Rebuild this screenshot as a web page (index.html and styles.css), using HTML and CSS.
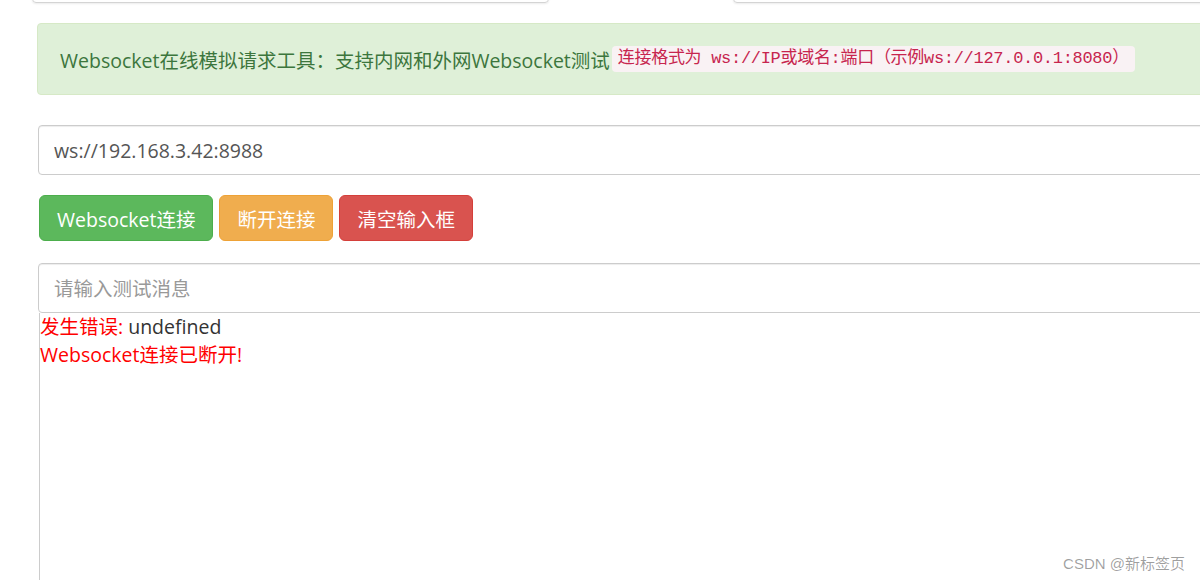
FILE: index.html
```html
<!DOCTYPE html>
<html lang="zh-CN">
<head>
<meta charset="utf-8">
<title>Websocket在线模拟请求工具</title>
<link rel="stylesheet" href="styles.css">
</head>
<body>
<div class="main">
  <div class="toprow">
    <div class="topbox left"></div>
    <div class="topbox right"></div>
  </div>

  <div class="alert">
    <span class="lead">Websocket在线模拟请求工具：支持内网和外网Websocket测试</span><code class="hint">连接格式为 ws://IP或域名:端口（示例ws://127.0.0.1:8080）</code>
  </div>

  <input class="field url" type="text" value="ws://192.168.3.42:8988">

  <div class="btnrow">
    <button class="btn green">Websocket连接</button>
    <button class="btn orange">断开连接</button>
    <button class="btn red">清空输入框</button>
  </div>

  <input class="field msg" type="text" placeholder="请输入测试消息">

  <div class="output">
    <div class="line"><span class="err">发生错误:</span> undefined</div>
    <div class="line err">Websocket连接已断开!</div>
  </div>
</div>
<div class="watermark">CSDN @新标签页</div>
</body>
</html>
```

FILE: styles.css
```css
html, body {
  margin: 0;
  padding: 0;
}
body {
  width: 1200px;
  height: 580px;
  overflow: hidden;
  position: relative;
  background: #fff;
  font-family: "Open Sans", "Noto Sans CJK SC", sans-serif;
  font-size: 19.5px;
  color: #333;
}
.main {
  width: 1260px;
  padding-left: 38px;
  box-sizing: border-box;
}
.toprow {
  display: flex;
  height: 40px;
  margin-top: -37px;
  margin-left: -6px;
}
.topbox {
  box-sizing: border-box;
  height: 40px;
  border: 1px solid #d4d4d4;
  border-radius: 4px;
  box-shadow: 0 1px 2px rgba(0, 0, 0, 0.08);
}
.topbox.left {
  width: 517px;
}
.topbox.right {
  margin-left: 184px;
  flex: 1;
}
.alert {
  margin-top: 20px;
  margin-left: -1px;
  height: 72px;
  box-sizing: border-box;
  display: flex;
  align-items: center;
  padding: 0 22px;
  background: #dff0d8;
  border: 1px solid #d6e9c6;
  border-radius: 4px;
  color: #3c763d;
  white-space: nowrap;
}
.lead {
  font-size: 19.5px;
  margin-right: 2px;
}
.hint {
  font-family: "Liberation Mono", "Noto Sans CJK SC", monospace;
  font-size: 17px;
  letter-spacing: -0.3px;
  color: #c7254e;
  background: #f9f2f4;
  border-radius: 4px;
  padding: 3px 6px;
  line-height: 20px;
}
.field {
  display: block;
  width: 100%;
  height: 50px;
  box-sizing: border-box;
  border: 1px solid #ccc;
  border-radius: 4px;
  padding: 0 15px;
  font-family: inherit;
  font-size: 19.5px;
  color: #555;
  background: #fff;
  box-shadow: inset 0 1px 1px rgba(0, 0, 0, 0.075);
  outline: none;
}
.field::placeholder {
  color: #999;
}
.url {
  margin-top: 30px;
}
.btnrow {
  display: flex;
  gap: 6px;
  margin-top: 20px;
  margin-left: 1px;
}
.btn {
  height: 46px;
  box-sizing: border-box;
  padding: 0 17px;
  font-family: inherit;
  font-size: 19.5px;
  color: #fff;
  border: 1px solid transparent;
  border-radius: 6px;
  cursor: pointer;
}
.green {
  background: #5cb85c;
  border-color: #4cae4c;
}
.orange {
  background: #f0ad4e;
  border-color: #eea236;
}
.red {
  background: #d9534f;
  border-color: #d43f3a;
}
.msg {
  margin-top: 22px;
}
.output {
  margin-left: 1px;
  height: 267px;
  border-left: 1px solid #ccc;
  line-height: 28px;
  font-size: 19.5px;
  color: #333;
}
.err {
  color: #f00;
}
.watermark {
  position: absolute;
  right: 15px;
  bottom: 7px;
  font-family: "Liberation Sans", "Noto Sans CJK SC", sans-serif;
  font-size: 15px;
  color: rgba(0, 0, 0, 0.38);
}
```
